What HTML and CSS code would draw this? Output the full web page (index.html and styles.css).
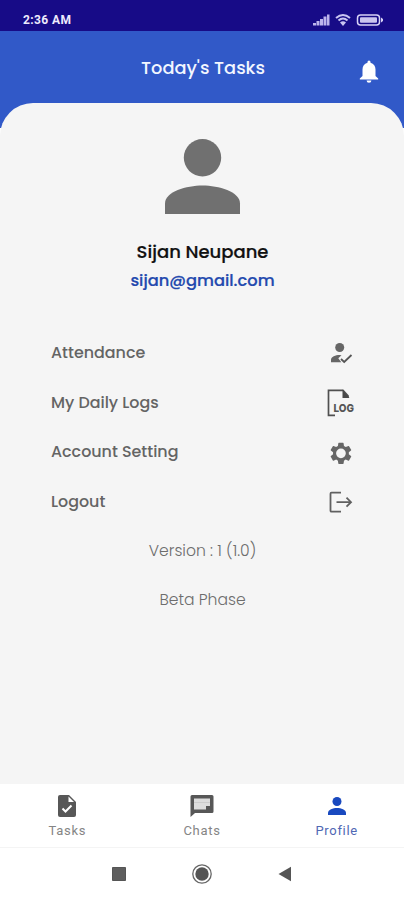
FILE: index.html
```html
<!DOCTYPE html>
<html lang="en">
<head>
<meta charset="utf-8">
<title>Profile</title>
<link rel="stylesheet" href="styles.css">
</head>
<body>
<div class="phone">
  <div class="status">
    <span class="time">2:36 AM</span>
    <svg class="status-icons" width="72" height="14" viewBox="0 0 72 14">
      <g fill="#bcb4ec"><path d="M1 10h3v2.500H1zM4.500 8h3v4.500h-3zM8 6h3v6.500H8zM11.500 3.500h3v9h-3zM15 1.500h2.500v11H15z"/></g>
      <g fill="none" stroke="#c9c4f2" stroke-width="2"><path d="M24 5q7-6 14 0M26.500 7.500q4.500-4 9 0"/></g>
      <path d="M28 9.500q3-2.400 6 0L31 13z" fill="#c9c4f2"/>
      <rect x="45.500" y="2" width="22" height="10" rx="3" fill="none" stroke="#d7d2f6" stroke-width="1.500"/>
      <rect x="48" y="4.300" width="17" height="5.400" rx="1" fill="#cbc5ee"/>
      <path d="M69 4.500l2 1.500v2l-2 1.500z" fill="#d7d2f6"/>
    </svg>
  </div>
  <header class="header">
    <h1 class="title">Today's Tasks</h1>
    <svg class="bell" width="20" height="24" viewBox="0 0 20 24"><path fill="#fff" d="M8.500 2.700V2a1.500 1.500 0 0 1 3 0v.7c3.400.8 5 3.500 5 6.800v6.500l2.700 2.400v1H.8v-1L3.500 16V9.500c0-3.300 1.600-6 5-6.800zM7.600 20.400h4.800a2.400 2.300 0 0 1-4.800 0z"/></svg>
  </header>
  <main class="card">
    <svg class="avatar" width="76" height="76" viewBox="0 0 76 76" fill="#707070"><circle cx="37.500" cy="18.700" r="18.700"/><path d="M0 75V64.500C0 52.500 21.500 46.500 37.500 46.500s37.500 6 37.500 18V75z"/></svg>
    <div class="name">Sijan Neupane</div>
    <div class="email">sijan@gmail.com</div>
    <ul class="menu">
      <li><span>Attendance</span>
        <svg width="28" height="28" viewBox="0 0 28 28"><circle cx="12.700" cy="8.500" r="4.500" fill="#666"/><path d="M4 23.300v-2.500c0-3 4.500-4.800 8.500-4.800l2 .3-3.200 3 3 4z" fill="#666"/><path d="M14 20l3.200 3 7.300-7" fill="none" stroke="#555" stroke-width="1.800"/></svg></li>
      <li><span>My Daily Logs</span>
        <svg class="log-icon" width="28" height="28" viewBox="0 0 28 28"><path d="M8 27.300H1.500V2.300h14.500l5 5.500v2" fill="none" stroke="#505050" stroke-width="1.700"/><path d="M15.500 1.500l7 8.500h-7z" fill="#484848"/><text x="6.500" y="23.500" class="log-text" textLength="20.500" lengthAdjust="spacingAndGlyphs">LOG</text></svg></li>
      <li><span>Account Setting</span>
        <svg width="28" height="28" viewBox="-1.200 -2.500 26.500 26.500"><path fill="#666" d="M19.430 12.980c.04-.32.07-.64.07-.98s-.03-.66-.07-.98l2.110-1.650c.19-.15.24-.42.120-.64l-2-3.460c-.12-.22-.39-.3-.61-.22l-2.490 1c-.52-.4-1.080-.73-1.690-.98l-.38-2.650C14.460 2.180 14.250 2 14 2h-4c-.25 0-.46.180-.49.420l-.38 2.650c-.61.250-1.170.590-1.690.980l-2.490-1c-.23-.09-.49 0-.61.220l-2 3.460c-.13.220-.07.490.120.640l2.110 1.650c-.04.320-.07.650-.07.980s.03.660.070.980l-2.110 1.650c-.19.150-.24.420-.12.640l2 3.460c.12.220.390.300.610.220l2.490-1c.52.400 1.080.730 1.690.980l.38 2.650c.03.240.240.420.490.420h4c.25 0 .46-.18.490-.42l.38-2.650c.61-.25 1.170-.59 1.690-.98l2.490 1c.23.090.490 0 .61-.22l2-3.460c.12-.22.070-.49-.12-.64zM12 16.600a4.600 4.600 0 1 1 0-9.200 4.600 4.600 0 0 1 0 9.200z"/></svg></li>
      <li><span>Logout</span>
        <svg width="28" height="28" viewBox="0 0 28 28" fill="none" stroke="#606060" stroke-width="1.800"><path d="M14 5.700H4.500Q3.500 5.700 3.500 6.700v17q0 1 1 1H14M9.500 15.200h14"/><path d="M19.500 10.700l4.500 4.500-4.500 4.500"/></svg></li>
    </ul>
    <p class="note">Version : 1 (1.0)</p>
    <p class="note">Beta Phase</p>
  </main>
  <nav class="tabs">
    <a class="tab"><svg width="24" height="24" viewBox="0 0 24 24"><path fill="#575757" d="M5 1h9l7 7v13q0 2-2 2H5q-2 0-2-2V3q0-2 2-2z"/><path fill="#fff" d="M13.500 2.500V8H19z"/><path d="M7.500 14.500l3 3 6-6" fill="none" stroke="#fff" stroke-width="2"/></svg><span>Tasks</span></a>
    <a class="tab"><svg width="24" height="24" viewBox="0 0 24 24"><path fill="#575757" d="M2 1h20q1.500 0 1.500 1.500v15q0 1.500-1.500 1.500H5l-4.500 4V2.500Q.5 1 2 1z"/><path fill="#ddd" d="M4 4.500h16V12h-4v3.500H4z"/><path d="M4 8.500h16" stroke="#ccc"/></svg><span>Chats</span></a>
    <a class="tab active"><svg width="24" height="24" viewBox="0 0 24 24" fill="#1949bf"><circle cx="12" cy="7.500" r="4.500"/><path d="M3 21v-2c0-3.500 5-5 9-5s9 1.500 9 5v2z"/></svg><span>Profile</span></a>
  </nav>
  <div class="system">
    <svg width="14" height="14"><path fill="#5e5e5e" stroke="#555" d="M.5.5h13v13H.5z"/></svg>
    <svg width="22" height="22" viewBox="0 0 22 22"><circle cx="11" cy="11" r="9.200" fill="none" stroke="#666" stroke-width="1.300"/><circle cx="11" cy="11" r="6.700" fill="#555"/></svg>
    <svg width="14" height="16" viewBox="0 0 14 16"><path d="M.5 8L13 .8v14.400z" fill="#555"/></svg>
  </div>
</div>
</body>
</html>
```

FILE: styles.css
```css
* { box-sizing: border-box; }
body { margin: 0; background: #fff; font-family: "Poppins", "Inter", sans-serif; }
.phone { width: 404px; height: 900px; display: flex; flex-direction: column; overflow: hidden; }
.status { height: 31px; flex: none; background: #170b87; display: flex; justify-content: space-between; align-items: flex-end; padding: 0 20px 4px 23px; }
.time { color: #eeeafd; font: 700 12px/15px Roboto, sans-serif; letter-spacing: .4px; margin-bottom: -1px; }
.status-icons { display: block; }
.header { height: 97px; flex: none; background: #3159c8; display: flex; justify-content: center; position: relative; padding: 24px 0 0 2px; }
.title { margin: 0; color: #f2f6ff; font-size: 17.8px; font-weight: 500; line-height: 26px; height: 26px; white-space: nowrap; }
.bell { position: absolute; right: 25px; top: 29px; }
.card { height: 681px; flex: none; margin-top: -25px; position: relative; background: #f5f5f5; border-radius: 33px 33px 0 0; display: flex; flex-direction: column; align-items: center; padding: 36px 0 0 1px; }
.avatar { display: block; }
.name { margin-top: 24px; height: 26px; font-size: 18px; line-height: 26px; font-weight: 500; color: #111; -webkit-text-stroke: .2px; }
.email { margin-top: 3px; height: 26px; font-size: 16.3px; line-height: 26px; font-weight: 500; color: #2349ae; -webkit-text-stroke: .2px; }
.menu { list-style: none; margin: 34px 0 0; padding: 0 49px 0 50px; width: 100%; }
.menu li { height: 49.5px; display: flex; align-items: center; justify-content: space-between; color: #646464; font-size: 15.9px; font-weight: 500; }
.menu svg { display: block; }
.menu .log-icon { overflow: visible; }
.log-text { font: 800 11px "Inter", sans-serif; fill: #555; }
.note { margin: 0; height: 49px; display: flex; align-items: center; font-size: 15.6px; font-weight: 300; color: #6d6d6d; }
.tabs { height: 64px; flex: none; background: #fff; display: grid; grid-template-columns: repeat(3, 1fr); border-bottom: 1px solid #f4f4f4; }
.tab { display: flex; flex-direction: column; align-items: center; padding-top: 10px; color: #858585; font: 400 13px/16px Roboto, sans-serif; gap: 5px; }
.tab span { letter-spacing: .7px; }
.tab svg { display: block; }
.tab.active { color: #5068b4; }
.system { height: 52px; display: flex; justify-content: center; align-items: center; gap: 65px; }
```
